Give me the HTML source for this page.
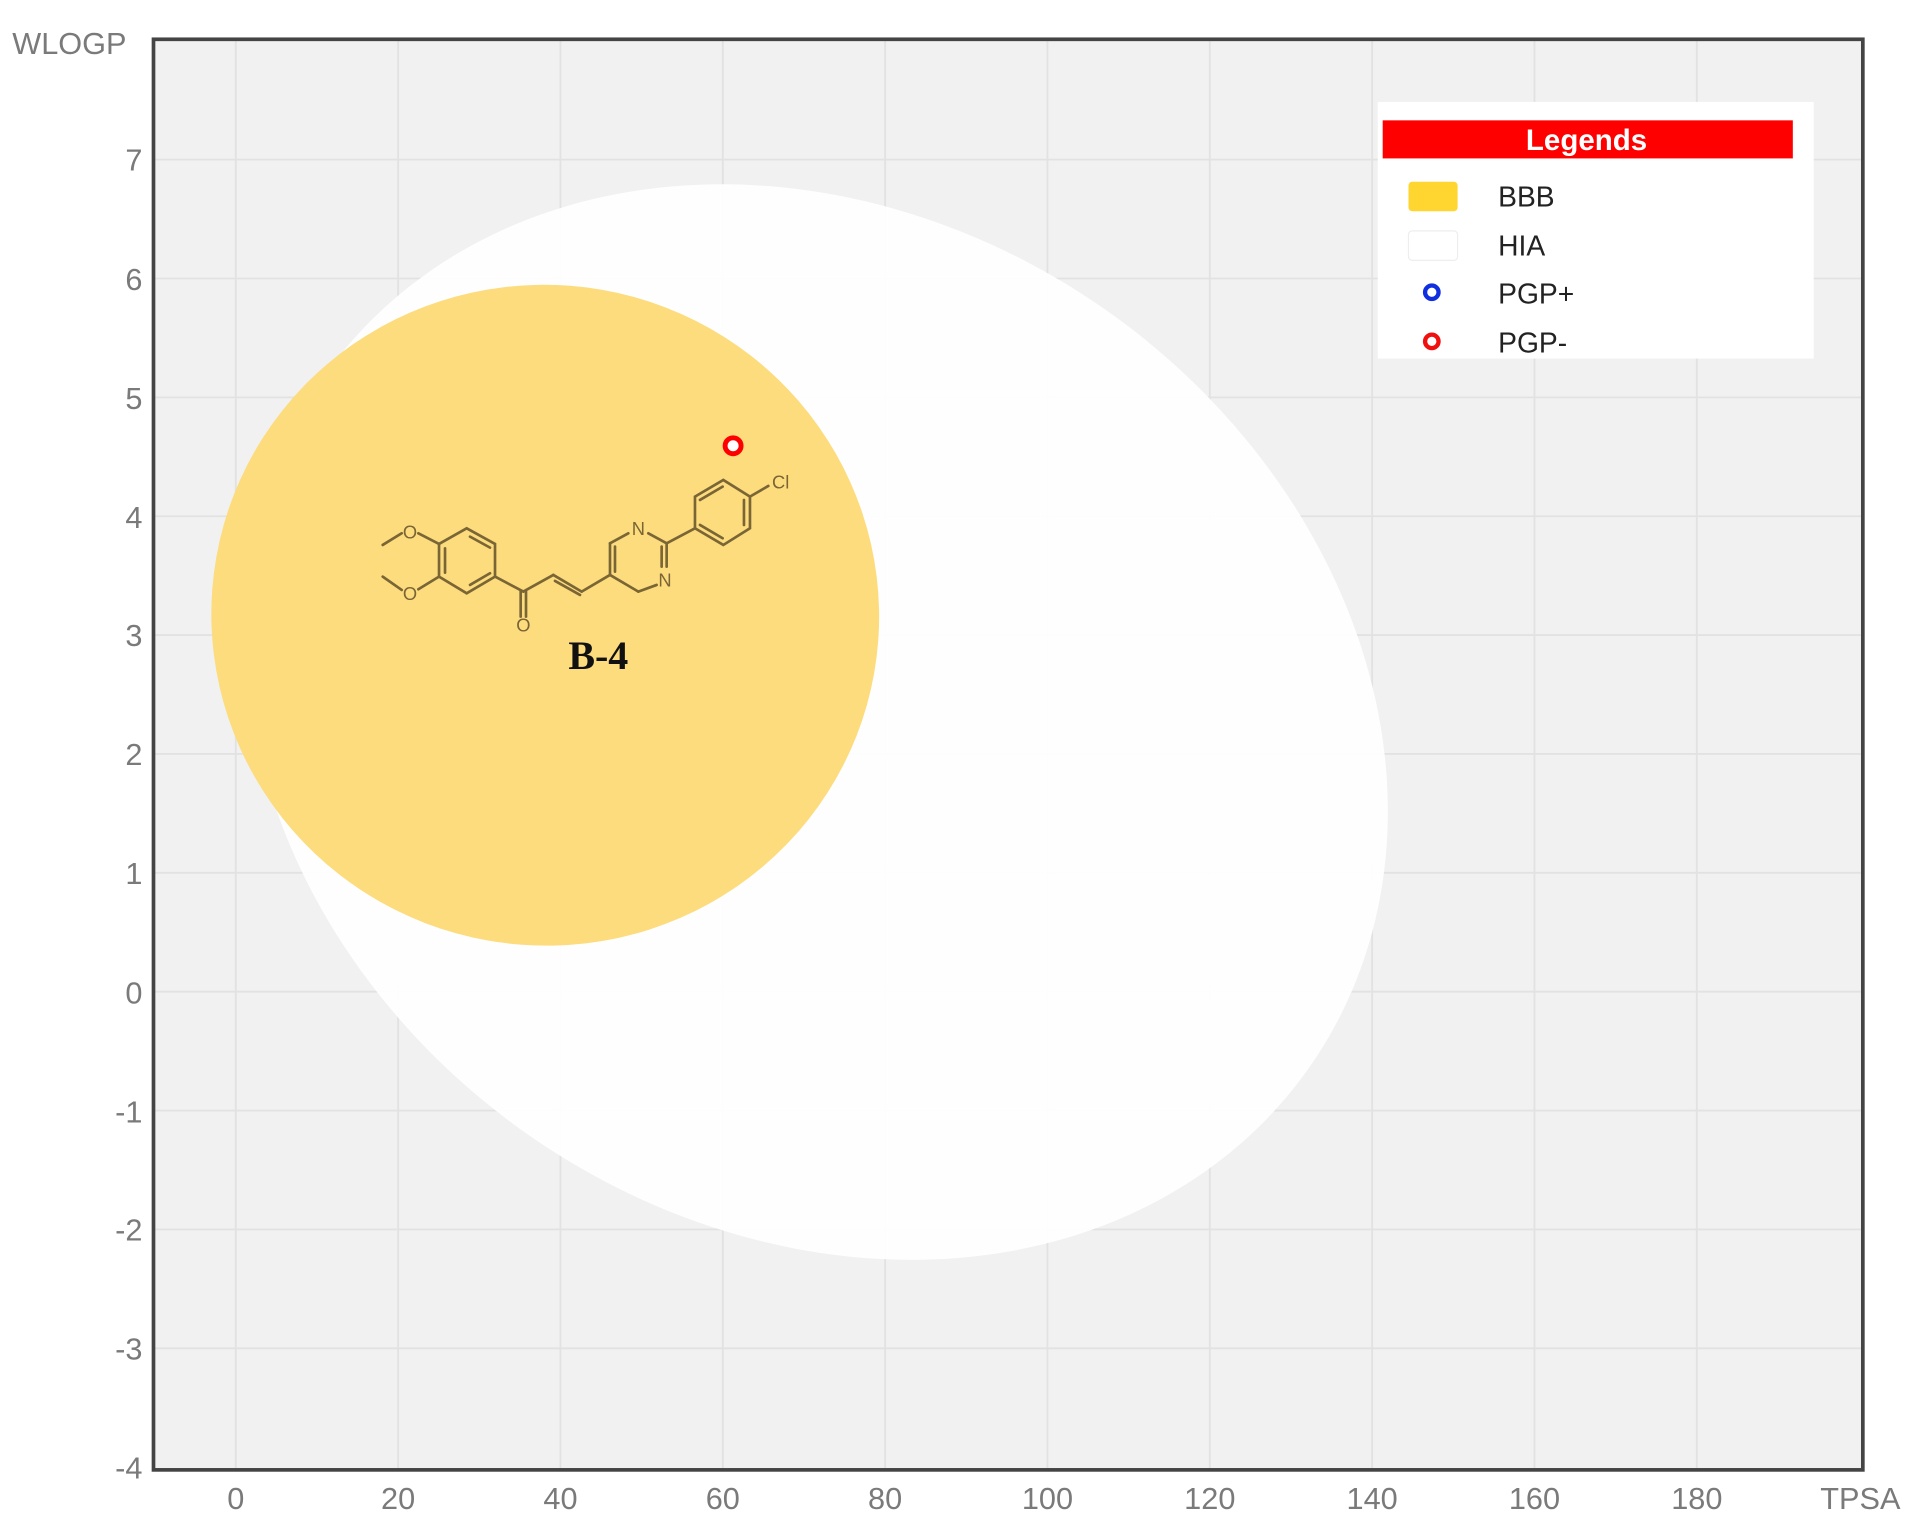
<!DOCTYPE html>
<html><head><meta charset="utf-8"><style>html,body{margin:0;padding:0;background:#fff}svg{display:block}</style></head>
<body>
<svg width="1916" height="1533" viewBox="0 0 1560.3 1248.4" preserveAspectRatio="none" xmlns="http://www.w3.org/2000/svg">
<rect x="0" y="0" width="1560.3" height="1248.4" fill="#fff"/>
<rect x="125" y="32" width="1392" height="1165" fill="#f1f1f1"/>
<g stroke="#e2e2e2" stroke-width="1.5">
<line x1="192" y1="32" x2="192" y2="1197"/><line x1="324.2" y1="32" x2="324.2" y2="1197"/><line x1="456.4" y1="32" x2="456.4" y2="1197"/><line x1="588.6" y1="32" x2="588.6" y2="1197"/><line x1="720.8" y1="32" x2="720.8" y2="1197"/><line x1="853" y1="32" x2="853" y2="1197"/><line x1="985.2" y1="32" x2="985.2" y2="1197"/><line x1="1117.4" y1="32" x2="1117.4" y2="1197"/><line x1="1249.6" y1="32" x2="1249.6" y2="1197"/><line x1="1381.8" y1="32" x2="1381.8" y2="1197"/>
<line x1="125" y1="130" x2="1517" y2="130"/><line x1="125" y1="226.8" x2="1517" y2="226.8"/><line x1="125" y1="323.6" x2="1517" y2="323.6"/><line x1="125" y1="420.4" x2="1517" y2="420.4"/><line x1="125" y1="517.2" x2="1517" y2="517.2"/><line x1="125" y1="614" x2="1517" y2="614"/><line x1="125" y1="710.8" x2="1517" y2="710.8"/><line x1="125" y1="807.6" x2="1517" y2="807.6"/><line x1="125" y1="904.4" x2="1517" y2="904.4"/><line x1="125" y1="1001.2" x2="1517" y2="1001.2"/><line x1="125" y1="1098" x2="1517" y2="1098"/>
</g>
<ellipse cx="665" cy="588" rx="490" ry="410" transform="rotate(35 665 588)" fill="#fff" fill-opacity="0.92"/>
<ellipse cx="444" cy="501" rx="272" ry="269" transform="rotate(10 444 501)" fill="#fddc7e"/>
<rect x="125" y="32" width="1392" height="1165" fill="none" stroke="#444" stroke-width="3"/>
<g font-family="Liberation Sans, sans-serif" font-size="25" fill="#7a7a7a">
<text x="10" y="44">WLOGP</text>
<g text-anchor="end">
<text x="116" y="139">7</text><text x="116" y="236">6</text><text x="116" y="333">5</text><text x="116" y="430">4</text><text x="116" y="526">3</text><text x="116" y="623">2</text><text x="116" y="720">1</text><text x="116" y="817">0</text><text x="116" y="914">-1</text><text x="116" y="1010">-2</text><text x="116" y="1107">-3</text><text x="116" y="1204">-4</text>
</g>
<g text-anchor="middle">
<text x="192" y="1229">0</text><text x="324.2" y="1229">20</text><text x="456.4" y="1229">40</text><text x="588.6" y="1229">60</text><text x="720.8" y="1229">80</text><text x="853" y="1229">100</text><text x="985.2" y="1229">120</text><text x="1117.4" y="1229">140</text><text x="1249.6" y="1229">160</text><text x="1381.8" y="1229">180</text><text x="1515" y="1229">TPSA</text>
</g>
</g>
<rect x="1122" y="83" width="355" height="209" fill="#fff"/>
<rect x="1126" y="98" width="334" height="31" fill="#f00"/>
<text x="1292" y="122" text-anchor="middle" font-family="Liberation Sans, sans-serif" font-weight="bold" font-size="24" fill="#fff">Legends</text>
<rect x="1147" y="148" width="40" height="24" rx="3" fill="#ffd530"/>
<rect x="1147" y="188" width="40" height="24" rx="3" fill="#fff" stroke="#eee"/>
<circle cx="1166" cy="238" r="5.5" fill="none" stroke="#1030e0" stroke-width="3.5"/>
<circle cx="1166" cy="278" r="5.5" fill="none" stroke="#f01010" stroke-width="3.5"/>
<g font-family="Liberation Sans, sans-serif" font-size="23" fill="#222">
<text x="1220" y="168">BBB</text><text x="1220" y="208">HIA</text><text x="1220" y="247">PGP+</text><text x="1220" y="287">PGP-</text>
</g>
<circle cx="597" cy="363" r="6.5" fill="#fff" stroke="#f00" stroke-width="4"/>
<g transform="translate(293.2 342) scale(0.2714)">
<g stroke="#7a6535" stroke-width="8" fill="none" stroke-linecap="round">
<polygon points="320,325 405,372 405,470 320,520 237,470 237,372"/>
<line x1="330" y1="350" x2="390" y2="383"/><line x1="390" y1="460" x2="330" y2="495"/><line x1="255" y1="385" x2="255" y2="458"/>
<line x1="237" y1="372" x2="175" y2="340"/><line x1="125" y1="340" x2="68" y2="375"/>
<line x1="237" y1="470" x2="175" y2="508"/><line x1="125" y1="510" x2="68" y2="470"/>
<line x1="405" y1="470" x2="490" y2="515"/><line x1="482" y1="515" x2="482" y2="590"/><line x1="498" y1="515" x2="498" y2="590"/>
<line x1="490" y1="515" x2="580" y2="465"/><line x1="580" y1="465" x2="665" y2="515"/><line x1="585" y1="483" x2="660" y2="525"/><line x1="665" y1="515" x2="750" y2="465"/>
<line x1="750" y1="465" x2="750" y2="370"/><line x1="765" y1="455" x2="765" y2="380"/><line x1="750" y1="370" x2="805" y2="340"/><line x1="865" y1="340" x2="920" y2="370"/>
<line x1="920" y1="370" x2="920" y2="440"/><line x1="905" y1="380" x2="905" y2="440"/><line x1="890" y1="495" x2="835" y2="515"/><line x1="835" y1="515" x2="750" y2="465"/>
<line x1="920" y1="370" x2="1005" y2="325"/>
<polygon points="1005,230 1090,180 1170,230 1170,325 1090,375 1005,325"/>
<line x1="1020" y1="240" x2="1088" y2="200"/><line x1="1152" y1="240" x2="1152" y2="315"/><line x1="1088" y1="355" x2="1020" y2="315"/>
<line x1="1170" y1="230" x2="1225" y2="198"/>
</g>
<g font-family="Liberation Sans, sans-serif" font-size="55" fill="#7a6535" text-anchor="middle">
<text x="150" y="355">O</text><text x="150" y="540">O</text><text x="490" y="635">O</text><text x="835" y="345">N</text><text x="915" y="500">N</text><text x="1262" y="205">Cl</text>
</g>
<text x="715" y="748" text-anchor="middle" font-family="Liberation Serif, serif" font-weight="bold" font-size="120" fill="#111">B-4</text>
</g>
</svg>
</body></html>
